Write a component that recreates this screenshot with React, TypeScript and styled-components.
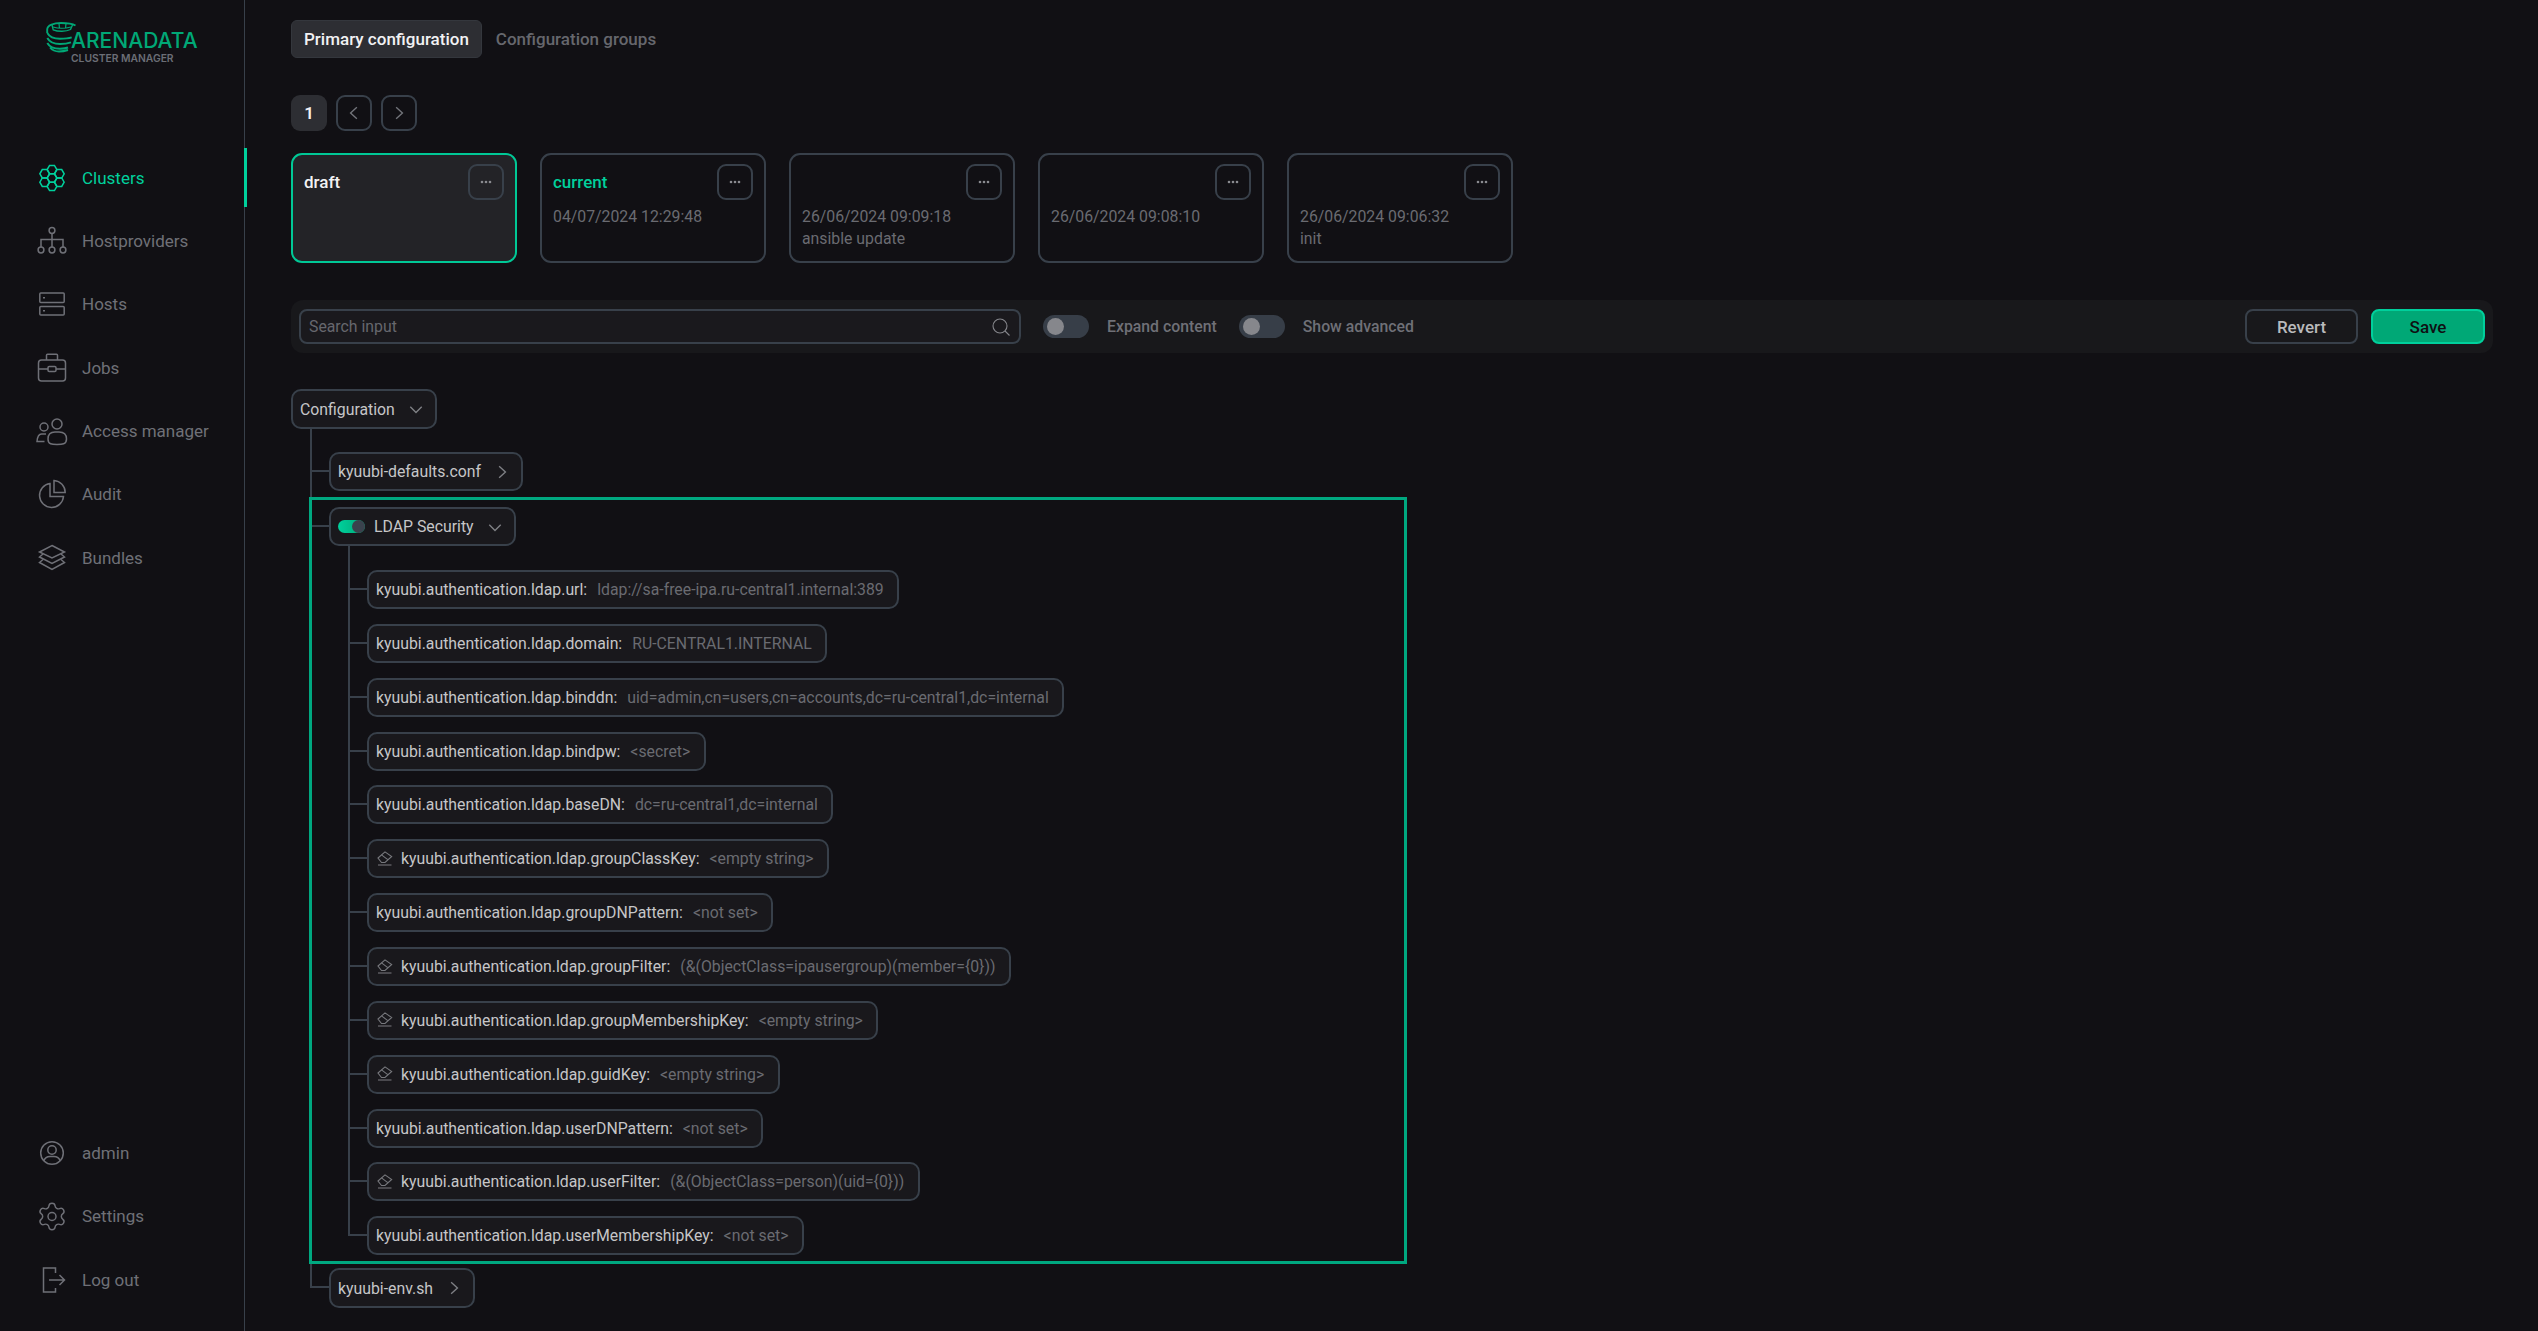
import React from "react";
import styled, { createGlobalStyle } from "styled-components";
import { Settings } from "lucide-react";

const BG = "#111014";
const LINE = "#38404a";
const GREEN = "#00d09c";
const MUTED = "#6f7077";

const Global = createGlobalStyle`
  html, body { margin: 0; padding: 0; height: 100%; background: ${BG}; overflow: hidden; }
  body { font-family: Roboto, "Liberation Sans", sans-serif; font-size: 15.82px; }
  * { box-sizing: border-box; }
`;

const Page = styled.div`
  display: flex;
  height: 1331px;
  background: ${BG};
  color: #c8c8ca;
`;

const Sidebar = styled.aside`
  width: 245px;
  flex: none;
  border-right: 1px solid ${LINE};
  display: flex;
  flex-direction: column;
  padding-bottom: 22px;
`;

const Logo = styled.div`
  height: 148px;
  padding: 22px 0 0 46px;
  display: flex;
  align-items: flex-start;
`;

const LogoText = styled.div`
  margin: 7px 0 0 -6px;
  display: flex;
  flex-direction: column;
`;

const LogoName = styled.span`
  font-family: Inter, sans-serif;
  font-size: 21px;
  line-height: 24px;
  font-weight: 500;
  letter-spacing: 0.05px;
  color: #00a876;
`;

const LogoSub = styled.span`
  font-family: Inter, sans-serif;
  font-size: 10.3px;
  line-height: 12px;
  font-weight: 600;
  color: #6b6e76;
  margin-top: -1px;
`;

const NavList = styled.nav`
  display: flex;
  flex-direction: column;
  gap: 4.4px;
`;

const BottomNav = styled(NavList)`
  margin-top: auto;
`;

const NavItem = styled.div<{ $active?: boolean }>`
  position: relative;
  height: 59px;
  display: flex;
  align-items: center;
  gap: 14px;
  padding-left: 36px;
  font-size: 17px;
  color: ${(p) => (p.$active ? GREEN : MUTED)};
  ${(p) =>
    p.$active &&
    `&::after { content: ""; position: absolute; right: -3px; top: 0; bottom: 0; width: 3px; background: ${GREEN}; }`}
`;

const NavIcon = styled.svg`
  width: 32px;
  height: 32px;
  flex: none;
  fill: none;
  stroke: currentColor;
  stroke-width: 1.5;
`;

const GearWrap = styled.span`
  width: 32px;
  height: 32px;
  flex: none;
  display: flex;
  align-items: center;
  justify-content: center;
`;

const Main = styled.main`
  flex: 1;
  min-width: 0;
  padding: 20px 45px 0 46px;
  display: flex;
  flex-direction: column;
`;

const Tabs = styled.div`
  display: flex;
  align-items: center;
  gap: 14px;
  height: 38px;
`;

const Tab = styled.div`
  height: 38px;
  display: flex;
  align-items: center;
  padding: 0 12px;
  border-radius: 6px;
  font-weight: 500;
  font-size: 17px;
  color: #f2f2f3;
  background: #2d2e33;
  border: 1px solid #34373d;
`;

const TabText = styled.div`
  font-weight: 500;
  font-size: 17px;
  color: #66676d;
`;

const Pager = styled.div`
  display: flex;
  gap: 9px;
  margin-top: 37px;
`;

const PageNumber = styled.div`
  width: 36px;
  height: 36px;
  border-radius: 9px;
  background: #2d2e33;
  color: #f2f2f3;
  font-weight: 600;
  font-size: 17px;
  display: flex;
  align-items: center;
  justify-content: center;
`;

const IconButton = styled.div`
  width: 36px;
  height: 36px;
  border-radius: 9px;
  border: 2px solid ${LINE};
  color: #73757b;
  display: flex;
  align-items: center;
  justify-content: center;
  flex: none;
`;

const Cards = styled.div`
  display: flex;
  gap: 23px;
  margin-top: 22px;
`;

const Card = styled.div<{ $selected?: boolean }>`
  width: 226px;
  height: 110px;
  border-radius: 11px;
  border: 2px solid ${(p) => (p.$selected ? "#00c896" : LINE)};
  background: ${(p) => (p.$selected ? "#232327" : "transparent")};
  padding: 9px 11px 0;
`;

const CardHead = styled.div`
  display: flex;
  align-items: center;
  justify-content: space-between;
  height: 36px;
  margin-bottom: 5.5px;
`;

const CardTitle = styled.span<{ $current?: boolean }>`
  font-weight: 500;
  font-size: 17px;
  color: ${(p) => (p.$current ? GREEN : "#f2f2f3")};
`;

const CardMeta = styled.div`
  line-height: 22.5px;
  color: #6a6b71;
`;

const DotsIcon = styled.svg`
  width: 12px;
  height: 4px;
  fill: #8a8b90;
`;

const Toolbar = styled.div`
  margin-top: 37px;
  height: 53px;
  width: 2202px;
  border-radius: 12px;
  background: #18181b;
  padding: 0 8px;
  display: flex;
  align-items: center;
`;

const SearchBox = styled.div`
  width: 722px;
  height: 35px;
  flex: none;
  border: 2px solid ${LINE};
  border-radius: 8px;
  background: #1a191d;
  padding: 0 8px;
  display: flex;
  align-items: center;
  justify-content: space-between;
  color: #66676d;
`;

const SearchIcon = styled.svg`
  width: 20px;
  height: 20px;
  fill: none;
  stroke: #85868b;
  stroke-width: 1.1;
`;

const Switch = styled.div`
  width: 46px;
  height: 23px;
  border-radius: 12px;
  background: #373e48;
  margin-left: 22px;
  padding: 3px 4px;
  flex: none;

  &::after {
    content: "";
    display: block;
    width: 17px;
    height: 17px;
    border-radius: 50%;
    background: #86878c;
  }
`;

const SwitchLabel = styled.span`
  margin-left: 18px;
  color: #6f7077;
  font-weight: 500;
  white-space: nowrap;
`;

const Actions = styled.div`
  margin-left: auto;
  display: flex;
  gap: 13px;
`;

const RevertButton = styled.div`
  width: 113px;
  height: 35px;
  border: 2px solid ${LINE};
  border-radius: 8px;
  display: flex;
  align-items: center;
  justify-content: center;
  font-weight: 500;
  font-size: 17px;
  color: #b9babc;
`;

const SaveButton = styled(RevertButton)`
  width: 114px;
  border-color: ${GREEN};
  background: #00a876;
  color: #0f1013;
`;

const Tree = styled.div`
  margin-top: 36px;
  display: flex;
  flex-direction: column;
  align-items: flex-start;
`;

const Chip = styled.div<{ $tall?: boolean }>`
  height: ${(p) => (p.$tall ? 40 : 39)}px;
  display: inline-flex;
  align-items: center;
  width: fit-content;
  flex: none;
  padding: 0 7px;
  border: 2px solid ${LINE};
  border-radius: 10px;
  background: #19181c;
  color: #c6c6c8;
  white-space: nowrap;
`;

const ChevronBox = styled.span`
  width: 24px;
  height: 24px;
  margin-left: 9px;
  display: flex;
  align-items: center;
  justify-content: center;
  color: #7f8085;
`;

const Branches = styled.div`
  position: relative;
  margin-left: 38px;
  display: flex;
  flex-direction: column;
  align-items: flex-start;
`;

const Node = styled.div<{ $pad: number; $center: number }>`
  position: relative;
  padding-top: ${(p) => p.$pad}px;

  &::before {
    content: "";
    position: absolute;
    left: -19px;
    width: 19px;
    height: 2px;
    top: ${(p) => p.$pad + p.$center}px;
    background: ${LINE};
  }

  &::after {
    content: "";
    position: absolute;
    left: -19px;
    width: 2px;
    top: 0;
    bottom: 0;
    background: ${LINE};
  }

  &:last-child::after {
    bottom: auto;
    height: ${(p) => p.$pad + p.$center + 2}px;
  }
`;

const Highlight = styled.div`
  position: relative;
  z-index: 1;
  margin: 6px 0 0 -20px;
  width: 1098px;
  height: 767px;
  border: 3px solid #00a880;
  background: ${BG};
  padding: 7px 0 0 17px;
`;

const HighlightChip = styled(Chip)`
  position: relative;

  &::before {
    content: "";
    position: absolute;
    left: -19px;
    top: 16px;
    width: 17px;
    height: 2px;
    background: ${LINE};
  }
`;

const Key = styled.span``;

const Value = styled.span`
  margin-left: 10px;
  margin-right: 6.5px;
  color: #6a6b71;
`;

const EraserIcon = styled.svg`
  width: 16px;
  height: 16px;
  margin: 0 8px 0 1px;
  flex: none;
  fill: none;
  stroke: #77787d;
  stroke-width: 1.05;
`;

const SmallSwitch = styled.span`
  width: 27px;
  height: 13px;
  border-radius: 7px;
  background: linear-gradient(90deg, #00d09c, #00a876);
  margin: 0 9px 0 0;
  position: relative;
  flex: none;

  &::after {
    content: "";
    position: absolute;
    right: 0;
    top: 0;
    width: 13px;
    height: 13px;
    border-radius: 50%;
    background: #3a424d;
  }
`;

const Chevron = ({ dir }: { dir: "down" | "right" | "left" }) => {
  const d =
    dir === "down" ? "M2 5 L7 10 L12 5" : dir === "right" ? "M4.5 2 L10 7 L4.5 12" : "M9.5 2 L4 7 L9.5 12";
  return (
    <svg width={16} height={16} viewBox="0 0 14 14" fill="none" stroke="currentColor" strokeWidth="1.2">
      <path d={d} />
    </svg>
  );
};

const Dots = () => (
  <DotsIcon viewBox="0 0 12 4">
    <circle cx="2" cy="2" r="1.3" />
    <circle cx="6" cy="2" r="1.3" />
    <circle cx="10" cy="2" r="1.3" />
  </DotsIcon>
);

const hexPoints = (cx: number, cy: number, r: number) =>
  [0, 60, 120, 180, 240, 300]
    .map((a) => `${(cx + r * Math.cos((a * Math.PI) / 180)).toFixed(2)},${(cy + r * Math.sin((a * Math.PI) / 180)).toFixed(2)}`)
    .join(" ");

const ClustersIcon = () => (
  <NavIcon viewBox="0 0 32 32">
    {[
      [16, 16],
      [16, 7.6],
      [16, 24.4],
      [8.7, 11.8],
      [23.3, 11.8],
      [8.7, 20.2],
      [23.3, 20.2],
    ].map(([x, y]) => (
      <polygon key={`${x}-${y}`} points={hexPoints(x, y, 4.85)} />
    ))}
  </NavIcon>
);

const HostprovidersIcon = () => (
  <NavIcon viewBox="0 0 32 32">
    <circle cx="16" cy="5.5" r="2.9" />
    <circle cx="5" cy="25" r="2.9" />
    <circle cx="16" cy="25" r="2.9" />
    <circle cx="27" cy="25" r="2.9" />
    <path d="M16 8.4 V22.1 M5 22.1 V14.5 H27 V22.1" />
  </NavIcon>
);

const HostsIcon = () => (
  <NavIcon viewBox="0 0 32 32">
    <rect x="3.8" y="5" width="24.4" height="9.5" rx="1" />
    <rect x="3.8" y="18.5" width="24.4" height="8.5" rx="1" />
    <path d="M7 9.7 H9 M7 22.8 H9" />
  </NavIcon>
);

const JobsIcon = () => (
  <NavIcon viewBox="0 0 32 32">
    <rect x="2.5" y="8" width="27" height="21" rx="3" />
    <path d="M10.5 8 V3.3 A1 1 0 0 1 11.5 2.3 H20.5 A1 1 0 0 1 21.5 3.3 V8" />
    <path d="M2.5 17 H12 M20 17 H29.5" />
    <rect x="12" y="14.5" width="8" height="5" rx="1.2" />
  </NavIcon>
);

const AccessIcon = () => (
  <NavIcon viewBox="0 0 32 32">
    <circle cx="21" cy="9" r="5" />
    <path d="M12 24 C12 19 15 17 19 17 H23 C27 17 30.5 19 30.5 24 C30.5 29.5 26 29.5 21 29.5 C16 29.5 12 29.5 12 24 Z" />
    <circle cx="8" cy="12" r="4" />
    <path d="M10 19 H5.5 C3 19 1.5 21 1 26.5 H8.5" />
  </NavIcon>
);

const AuditIcon = () => (
  <NavIcon viewBox="0 0 32 32">
    <path d="M14 5.5 A12 12 0 1 0 27.5 18.5 H14 Z" />
    <path d="M18 2.5 A12 12 0 0 1 29.2 14.5 H18 Z" />
  </NavIcon>
);

const BundlesIcon = () => (
  <NavIcon viewBox="0 0 32 32">
    <path d="M16 3.5 L28.5 10 L16 16 L3.5 10 Z" />
    <path d="M7 12 L3.5 15 L16 21.5 L28.5 15 L25 12" />
    <path d="M7 17.5 L3.5 20.5 L16 27.5 L28.5 20.5 L25 17.5" />
  </NavIcon>
);

const AdminIcon = () => (
  <NavIcon viewBox="0 0 32 32">
    <circle cx="16" cy="16" r="11.3" />
    <circle cx="16" cy="13" r="4.2" />
    <path d="M7.8 24 C8.8 21 11 19.5 14 19.5 H18 C21 19.5 23.2 21 24.2 24" />
  </NavIcon>
);

const SettingsIcon = () => (
  <GearWrap>
    <Settings size={33} strokeWidth={1.1} />
  </GearWrap>
);

const LogoutIcon = () => (
  <NavIcon viewBox="0 0 32 32">
    <path d="M19.5 9 V4 H7.5 V28 H19.5 V24" />
    <path d="M13 16 H28 M23.5 11 L28.5 16 L23.5 21" />
  </NavIcon>
);

const Eraser = () => (
  <EraserIcon viewBox="0 0 16 16">
    <path d="M1 7 L8 0.8 L14.7 5.5 L8 11.5 H4.5 Z" />
    <path d="M4.5 3.8 L10.8 8.6" />
    <path d="M1 14 H14.5" />
  </EraserIcon>
);

const LogoMark = () => (
  <svg width="31" height="31" viewBox="0 0 31 31" fill="none" stroke="#00a876" strokeWidth="1.9">
    <path d="M1.2 11 V7.5 C1.2 3 8 1 15 1 C21 1 26 1.5 29.5 3.5" />
    <path d="M6 3 L7.2 7.8 C12 9.8 20 9.8 24.5 7.5 L26.5 3" strokeWidth="1.4" />
    <path d="M13 1.5 L13.5 6.5 M20 1.5 L19.5 6.5 M7 5 C12 6.5 19 6.5 25 5" strokeWidth="1.2" />
    <path d="M1.3 11 C3.5 15 9 16.7 14 16.7 C18 16.7 23 16.2 25.7 15.3" />
    <path d="M1.3 16 C3.5 20 9 22 14 22 C18 22 22 21.4 25 20.3" />
    <path d="M1.3 21 C3.5 25 9 26.7 14 26.7 C17 26.7 20 26.3 22 25.5" />
    <path d="M4 25.5 C6.5 28.5 9.5 29.5 13 29.5 C16 29.5 19 29 22 28" />
  </svg>
);

type Row = { k: string; v: string; eraser?: boolean };

const rows: Row[] = [
  { k: "kyuubi.authentication.ldap.url:", v: "ldap://sa-free-ipa.ru-central1.internal:389" },
  { k: "kyuubi.authentication.ldap.domain:", v: "RU-CENTRAL1.INTERNAL" },
  { k: "kyuubi.authentication.ldap.binddn:", v: "uid=admin,cn=users,cn=accounts,dc=ru-central1,dc=internal" },
  { k: "kyuubi.authentication.ldap.bindpw:", v: "<secret>" },
  { k: "kyuubi.authentication.ldap.baseDN:", v: "dc=ru-central1,dc=internal" },
  { k: "kyuubi.authentication.ldap.groupClassKey:", v: "<empty string>", eraser: true },
  { k: "kyuubi.authentication.ldap.groupDNPattern:", v: "<not set>" },
  { k: "kyuubi.authentication.ldap.groupFilter:", v: "(&(ObjectClass=ipausergroup)(member={0}))", eraser: true },
  { k: "kyuubi.authentication.ldap.groupMembershipKey:", v: "<empty string>", eraser: true },
  { k: "kyuubi.authentication.ldap.guidKey:", v: "<empty string>", eraser: true },
  { k: "kyuubi.authentication.ldap.userDNPattern:", v: "<not set>" },
  { k: "kyuubi.authentication.ldap.userFilter:", v: "(&(ObjectClass=person)(uid={0}))", eraser: true },
  { k: "kyuubi.authentication.ldap.userMembershipKey:", v: "<not set>" },
];

const cards = [
  { title: "draft", selected: true, lines: [] as string[] },
  { title: "current", current: true, lines: ["04/07/2024 12:29:48"] },
  { title: "", lines: ["26/06/2024 09:09:18", "ansible update"] },
  { title: "", lines: ["26/06/2024 09:08:10"] },
  { title: "", lines: ["26/06/2024 09:06:32", "init"] },
];

const mainNav = [
  { label: "Clusters", Icon: ClustersIcon, active: true },
  { label: "Hostproviders", Icon: HostprovidersIcon },
  { label: "Hosts", Icon: HostsIcon },
  { label: "Jobs", Icon: JobsIcon },
  { label: "Access manager", Icon: AccessIcon },
  { label: "Audit", Icon: AuditIcon },
  { label: "Bundles", Icon: BundlesIcon },
];

const bottomNav = [
  { label: "admin", Icon: AdminIcon },
  { label: "Settings", Icon: SettingsIcon },
  { label: "Log out", Icon: LogoutIcon },
];

export default function App() {
  return (
    <Page>
      <Global />
      <Sidebar>
        <Logo>
          <LogoMark />
          <LogoText>
            <LogoName>ARENADATA</LogoName>
            <LogoSub>CLUSTER MANAGER</LogoSub>
          </LogoText>
        </Logo>
        <NavList>
          {mainNav.map(({ label, Icon, active }) => (
            <NavItem key={label} $active={active}>
              <Icon />
              {label}
            </NavItem>
          ))}
        </NavList>
        <BottomNav>
          {bottomNav.map(({ label, Icon }) => (
            <NavItem key={label}>
              <Icon />
              {label}
            </NavItem>
          ))}
        </BottomNav>
      </Sidebar>
      <Main>
        <Tabs>
          <Tab>Primary configuration</Tab>
          <TabText>Configuration groups</TabText>
        </Tabs>
        <Pager>
          <PageNumber>1</PageNumber>
          <IconButton>
            <Chevron dir="left" />
          </IconButton>
          <IconButton>
            <Chevron dir="right" />
          </IconButton>
        </Pager>
        <Cards>
          {cards.map((c, i) => (
            <Card key={i} $selected={c.selected}>
              <CardHead>
                <CardTitle $current={c.current}>{c.title}</CardTitle>
                <IconButton>
                  <Dots />
                </IconButton>
              </CardHead>
              {c.lines.map((l) => (
                <CardMeta key={l}>{l}</CardMeta>
              ))}
            </Card>
          ))}
        </Cards>
        <Toolbar>
          <SearchBox>
            Search input
            <SearchIcon viewBox="0 0 20 20">
              <circle cx="9" cy="9" r="7" />
              <path d="M14 14 L18.5 18.5" />
            </SearchIcon>
          </SearchBox>
          <Switch />
          <SwitchLabel>Expand content</SwitchLabel>
          <Switch />
          <SwitchLabel>Show advanced</SwitchLabel>
          <Actions>
            <RevertButton>Revert</RevertButton>
            <SaveButton>Save</SaveButton>
          </Actions>
        </Toolbar>
        <Tree>
          <Chip $tall>
            Configuration
            <ChevronBox>
              <Chevron dir="down" />
            </ChevronBox>
          </Chip>
          <Branches>
            <Node $pad={23} $center={18}>
              <Chip>
                kyuubi-defaults.conf
                <ChevronBox>
                  <Chevron dir="right" />
                </ChevronBox>
              </Chip>
            </Node>
            <Node $pad={0} $center={30}>
              <Highlight>
                <HighlightChip>
                  <SmallSwitch />
                  LDAP Security
                  <ChevronBox>
                    <Chevron dir="down" />
                  </ChevronBox>
                </HighlightChip>
                <Branches>
                  {rows.map((r, i) => (
                    <Node key={r.k} $pad={i === 0 ? 24 : 14.87} $center={18}>
                      <Chip>
                        {r.eraser && <Eraser />}
                        <Key>{r.k}</Key>
                        <Value>{r.v}</Value>
                      </Chip>
                    </Node>
                  ))}
                </Branches>
              </Highlight>
            </Node>
            <Node $pad={4} $center={18}>
              <Chip $tall>
                kyuubi-env.sh
                <ChevronBox>
                  <Chevron dir="right" />
                </ChevronBox>
              </Chip>
            </Node>
          </Branches>
        </Tree>
      </Main>
    </Page>
  );
}
